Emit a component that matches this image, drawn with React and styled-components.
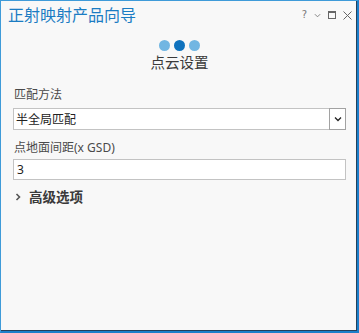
import React from 'react';
import styled, { createGlobalStyle } from 'styled-components';

const GlobalStyle = createGlobalStyle`
  html, body {
    margin: 0;
    padding: 0;
    width: 359px;
    height: 333px;
    overflow: hidden;
    background: #f8f8f8;
  }
`;

const Window = styled.div`
  box-sizing: border-box;
  width: 359px;
  height: 333px;
  background: #f8f8f8;
  border-style: solid;
  border-color: #3f9bd9 #1c7fca #1c7fca #3f9bd9;
  border-width: 1px 2px 2px 1px;
  box-shadow: inset -1px -1px 0 #23405c;
  font-family: "Noto Sans", "Noto Sans CJK SC", sans-serif;
  color: #333;
  display: flex;
  flex-direction: column;
`;

const TitleBar = styled.div`
  display: flex;
  align-items: center;
  height: 28px;
  padding: 0 5px 0 7px;
`;

const Title = styled.div`
  flex: 1;
  font-size: 16px;
  color: #1b7cc3;
  font-family: "Noto Sans CJK SC", sans-serif;
  line-height: 16px;
  margin-top: -3px;
`;

const Controls = styled.div`
  display: flex;
  align-items: center;
  gap: 7px;
  color: #6a6a6a;
`;

const Help = styled.span`
  font-family: "DejaVu Sans", sans-serif;
  font-size: 10px;
  color: #777;
  margin-top: -2px;
`;

const Body = styled.div`
  display: flex;
  flex-direction: column;
  padding: 11px 12px 0 12px;
`;

const Steps = styled.div`
  display: flex;
  justify-content: center;
  gap: 4px;
  margin-left: 1px;
`;

const Dot = styled.span`
  width: 11px;
  height: 11px;
  border-radius: 50%;
  background: ${p => (p.$active ? '#0f72bd' : '#72b6e2')};
`;

const StepTitle = styled.div`
  height: 18px;
  text-align: center;
  font-family: "Noto Sans CJK SC", sans-serif;
  font-size: 14.5px;
  line-height: 18px;
  color: #3a3a3a;
  margin-top: 2px;
  margin-left: 1px;
`;

const Label = styled.div`
  height: 16px;
  font-family: "Noto Sans", "Noto Sans CJK SC", sans-serif;
  font-size: 12px;
  line-height: 16px;
  color: #4a4a4a;
  margin-top: ${p => p.$top || 0}px;
  margin-bottom: ${p => p.$bottom ?? 5}px;
  margin-left: 1px;
`;

const Box = styled.div`
  box-sizing: border-box;
  height: ${p => p.$h || 21}px;
  width: 333px;
  background: #fff;
  border: 1px solid #c3c3c3;
  display: flex;
  align-items: center;
  font-family: "Noto Sans", "Noto Sans CJK SC", sans-serif;
  font-size: 12px;
  color: #222;
`;

const BoxText = styled.span`
  flex: 1;
  padding-left: ${p => p.$pad || 2}px;
`;

const DropButton = styled.span`
  box-sizing: border-box;
  width: 17px;
  height: calc(100% + 2px);
  margin: -1px -1px -1px 0;
  border: 1px solid #a2a2a2;
  display: flex;
  align-items: center;
  justify-content: center;
`;

const Expander = styled.div`
  height: 19px;
  display: flex;
  align-items: center;
  gap: 7px;
  margin-top: 7px;
  margin-left: 1px;
`;

const ExpanderText = styled.span`
  font-family: "Noto Sans CJK SC", sans-serif;
  font-weight: 700;
  font-size: 13.5px;
  line-height: 19px;
  color: #3a3a3a;
`;

function Chevron({ dir = 'down', size = 8, color = '#333', width = 1.4 }) {
  const d = dir === 'down' ? 'M1 2.5 L4 5.5 L7 2.5' : 'M2.5 1 L5.5 4 L2.5 7';
  return (
    <svg width={size} height={size} viewBox="0 0 8 8" fill="none">
      <path d={d} stroke={color} strokeWidth={width} />
    </svg>
  );
}

export default function App() {
  return (
    <>
      <GlobalStyle />
      <Window>
        <TitleBar>
          <Title>正射映射产品向导</Title>
          <Controls>
            <Help>?</Help>
            <Chevron dir="down" size={7} color="#777" width={1} />
            <svg width="8" height="8" viewBox="0 0 8 8" fill="none">
              <rect x="0.5" y="0.5" width="7" height="7" stroke="#666" />
              <rect x="0.5" y="0.5" width="7" height="1.5" fill="#666" />
            </svg>
            <svg width="9" height="9" viewBox="0 0 9 9" fill="none">
              <path d="M0.5 0.5 L8.5 8.5 M8.5 0.5 L0.5 8.5" stroke="#666" strokeWidth="1" />
            </svg>
          </Controls>
        </TitleBar>
        <Body>
          <Steps>
            <Dot />
            <Dot $active />
            <Dot />
          </Steps>
          <StepTitle>点云设置</StepTitle>
          <Label $top={16}>匹配方法</Label>
          <Box $h={22}>
            <BoxText>半全局匹配</BoxText>
            <DropButton>
              <Chevron dir="down" size={8} color="#222" width={1.3} />
            </DropButton>
          </Box>
          <Label $top={10} $bottom={3}>点地面间距(x GSD)</Label>
          <Box $h={21}>
            <BoxText $pad={3}>3</BoxText>
          </Box>
          <Expander>
            <Chevron dir="right" size={8} color="#555" width={1.6} />
            <ExpanderText>高级选项</ExpanderText>
          </Expander>
        </Body>
      </Window>
    </>
  );
}
